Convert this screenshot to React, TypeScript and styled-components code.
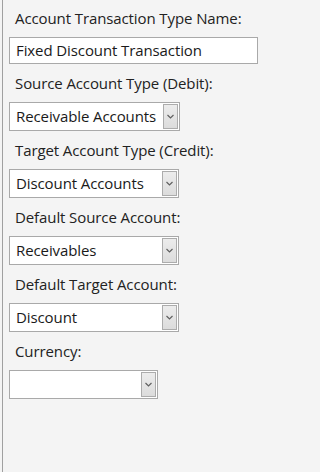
import React from "react";
import styled, { createGlobalStyle } from "styled-components";

const GlobalStyle = createGlobalStyle`
  html, body {
    margin: 0;
    padding: 0;
    background: #f4f4f4;
  }
  body {
    font-family: "Open Sans", "Noto Sans", sans-serif;
    font-size: 15px;
    color: #1e1e1e;
  }
`;

const Panel = styled.div`
  margin-left: 2px;
  min-height: 472px;
  border-left: 1px solid #a0a0a0;
  padding: 0 6px;
  box-sizing: border-box;
  display: flex;
  flex-direction: column;
`;

const Label = styled.div<{ $first?: boolean }>`
  padding: ${(p) => (p.$first ? "8px" : "9px")} 6px 9px;
  line-height: 20px;
  height: 20px;
  color: #222;
  white-space: nowrap;
  letter-spacing: -0.1px;
`;

const TextBox = styled.div`
  width: 249px;
  height: 27px;
  box-sizing: border-box;
  border: 1px solid #a9a9a9;
  background: #fff;
  padding: 0 6px;
  line-height: 25px;
  color: #1a1a1a;
  white-space: nowrap;
  letter-spacing: -0.1px;
`;

const Combo = styled.div<{ $width: number }>`
  width: ${(p) => p.$width}px;
  height: 29px;
  box-sizing: border-box;
  border: 1px solid #a9a9a9;
  background: #fff;
  display: flex;
  align-items: stretch;
  padding: 1px;
`;

const ComboText = styled.div`
  flex: 1;
  padding-left: 5px;
  line-height: 25px;
  color: #1a1a1a;
  white-space: nowrap;
  overflow: hidden;
  letter-spacing: -0.1px;
`;

const DropButton = styled.div`
  width: 15px;
  box-sizing: border-box;
  border: 1px solid #acacac;
  background: linear-gradient(#ececec, #dcdcdc);
  display: flex;
  align-items: center;
  justify-content: center;
`;

const Chevron = () => (
  <svg width="7" height="5" viewBox="0 0 7 5">
    <polyline points="0.5,1 3.5,4 6.5,1" fill="none" stroke="#606060" strokeWidth="1.2" />
  </svg>
);

const ComboBox: React.FC<{ value?: string; width: number }> = ({ value, width }) => (
  <Combo $width={width}>
    <ComboText>{value}</ComboText>
    <DropButton>
      <Chevron />
    </DropButton>
  </Combo>
);

const fields = [
  { label: "Source Account Type (Debit):", value: "Receivable Accounts", width: 171 },
  { label: "Target Account Type (Credit):", value: "Discount Accounts", width: 170 },
  { label: "Default Source Account:", value: "Receivables", width: 170 },
  { label: "Default Target Account:", value: "Discount", width: 170 },
  { label: "Currency:", value: "", width: 149 },
];

export default function App() {
  return (
    <>
      <GlobalStyle />
      <Panel>
        <Label $first>Account Transaction Type Name:</Label>
        <TextBox>Fixed Discount Transaction</TextBox>
        {fields.map((f) => (
          <React.Fragment key={f.label}>
            <Label>{f.label}</Label>
            <ComboBox value={f.value} width={f.width} />
          </React.Fragment>
        ))}
      </Panel>
    </>
  );
}
